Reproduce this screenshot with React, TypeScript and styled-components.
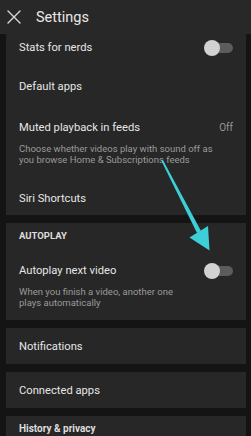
import styled, { createGlobalStyle } from "styled-components";

const GlobalStyle = createGlobalStyle`
  html, body {
    margin: 0;
    padding: 0;
    background: #141414;
  }
  body {
    font-family: Roboto, "Noto Sans", Arial, sans-serif;
    -webkit-font-smoothing: antialiased;
  }
`;

const Page = styled.div`
  position: relative;
  width: 251px;
  height: 436px;
  overflow: hidden;
  background: #141414;
  color: #e6e6e6;
`;

const Header = styled.div`
  height: 34px;
  display: flex;
  align-items: center;
  background: #282828;
  padding-left: 7px;
  gap: 15px;
  box-sizing: border-box;
`;

const Title = styled.div`
  font-size: 14.5px;
  color: #e8e8e8;
  line-height: 16px;
  margin-top: 1px;
`;

const List = styled.div`
  display: flex;
  flex-direction: column;
  gap: 8px;
  padding: 0 5px 0 6px;
`;

const Card = styled.div`
  background: #272727;
  display: flex;
  flex-direction: column;
`;

const Item = styled.div<{ $top?: number; $bottom?: number; $pad?: number }>`
  padding: ${(p) => p.$pad ?? 12}px 13px;
  padding-top: ${(p) => p.$top ?? p.$pad ?? 12}px;
  padding-bottom: ${(p) => p.$bottom ?? p.$pad ?? 12}px;
  display: flex;
  flex-direction: column;
`;

const ItemRow = styled.div`
  display: flex;
  align-items: center;
  justify-content: space-between;
  height: 15px;
`;

const ItemTitle = styled.span`
  font-size: 11.2px;
  color: #e6e6e6;
`;

const Value = styled.span`
  font-size: 10px;
  color: #999;
`;

const Desc = styled.div<{ $extra?: number }>`
  font-size: 9.5px;
  line-height: 11px;
  color: #9a9a9a;
  margin-top: 8px;
  padding-bottom: ${(p) => p.$extra ?? 0}px;
`;

const SectionLabel = styled.div<{ $size: number; $pb: number }>`
  font-size: ${(p) => p.$size}px;
  font-weight: 700;
  line-height: 10px;
  color: #dedede;
  padding: 8px 13px ${(p) => p.$pb}px;
`;

const Toggle = styled.div`
  position: relative;
  width: 29px;
  height: 16px;
  flex-shrink: 0;
`;

const Track = styled.div`
  position: absolute;
  left: 7px;
  right: 0;
  top: 3px;
  height: 10px;
  border-radius: 5px;
  background: #5c5c5c;
`;

const Knob = styled.div`
  position: absolute;
  left: 0;
  top: 0;
  width: 16px;
  height: 16px;
  border-radius: 50%;
  background: #d2d2d2;
`;

const Overlay = styled.svg`
  position: absolute;
  left: 0;
  top: 0;
  pointer-events: none;
`;

const Switch = () => (
  <Toggle>
    <Track />
    <Knob />
  </Toggle>
);

const CloseIcon = () => (
  <svg width="14" height="14" viewBox="0 0 14 14">
    <path d="M1 1 L13 13 M13 1 L1 13" stroke="#d8d8d8" strokeWidth="1.4" strokeLinecap="round" />
  </svg>
);

export default function App() {
  return (
    <>
      <GlobalStyle />
      <Page>
        <Header>
          <CloseIcon />
          <Title>Settings</Title>
        </Header>
        <List>
          <Card>
            <Item $top={6}>
              <ItemRow>
                <ItemTitle>Stats for nerds</ItemTitle>
                <Switch />
              </ItemRow>
            </Item>
            <Item>
              <ItemRow>
                <ItemTitle>Default apps</ItemTitle>
              </ItemRow>
            </Item>
            <Item $top={13.5}>
              <ItemRow>
                <ItemTitle>Muted playback in feeds</ItemTitle>
                <Value>Off</Value>
              </ItemRow>
              <Desc $extra={3}>
                Choose whether videos play with sound off as
                <br />
                you browse Home &amp; Subscriptions feeds
              </Desc>
            </Item>
            <Item $top={11} $bottom={9.5}>
              <ItemRow>
                <ItemTitle>Siri Shortcuts</ItemTitle>
              </ItemRow>
            </Item>
          </Card>
          <Card>
            <SectionLabel $size={9.5} $pb={10}>AUTOPLAY</SectionLabel>
            <Item>
              <ItemRow>
                <ItemTitle>Autoplay next video</ItemTitle>
                <Switch />
              </ItemRow>
              <Desc>
                When you finish a video, another one
                <br />
                plays automatically
              </Desc>
            </Item>
          </Card>
          <Card>
            <Item $pad={10.5}>
              <ItemRow>
                <ItemTitle>Notifications</ItemTitle>
              </ItemRow>
            </Item>
          </Card>
          <Card>
            <Item $pad={10.5}>
              <ItemRow>
                <ItemTitle>Connected apps</ItemTitle>
              </ItemRow>
            </Item>
          </Card>
          <Card>
            <SectionLabel $size={10} $pb={10}>History &amp; privacy</SectionLabel>
          </Card>
        </List>
        <Overlay width="251" height="436" viewBox="0 0 251 436">
          <polygon
            points="161.2,160.5 162.8,159.7 201,231 197,233"
            fill="#3ccfd6"
          />
          <polygon points="189.5,237.5 208,226 209.5,250.5" fill="#3ccfd6" />
        </Overlay>
      </Page>
    </>
  );
}
